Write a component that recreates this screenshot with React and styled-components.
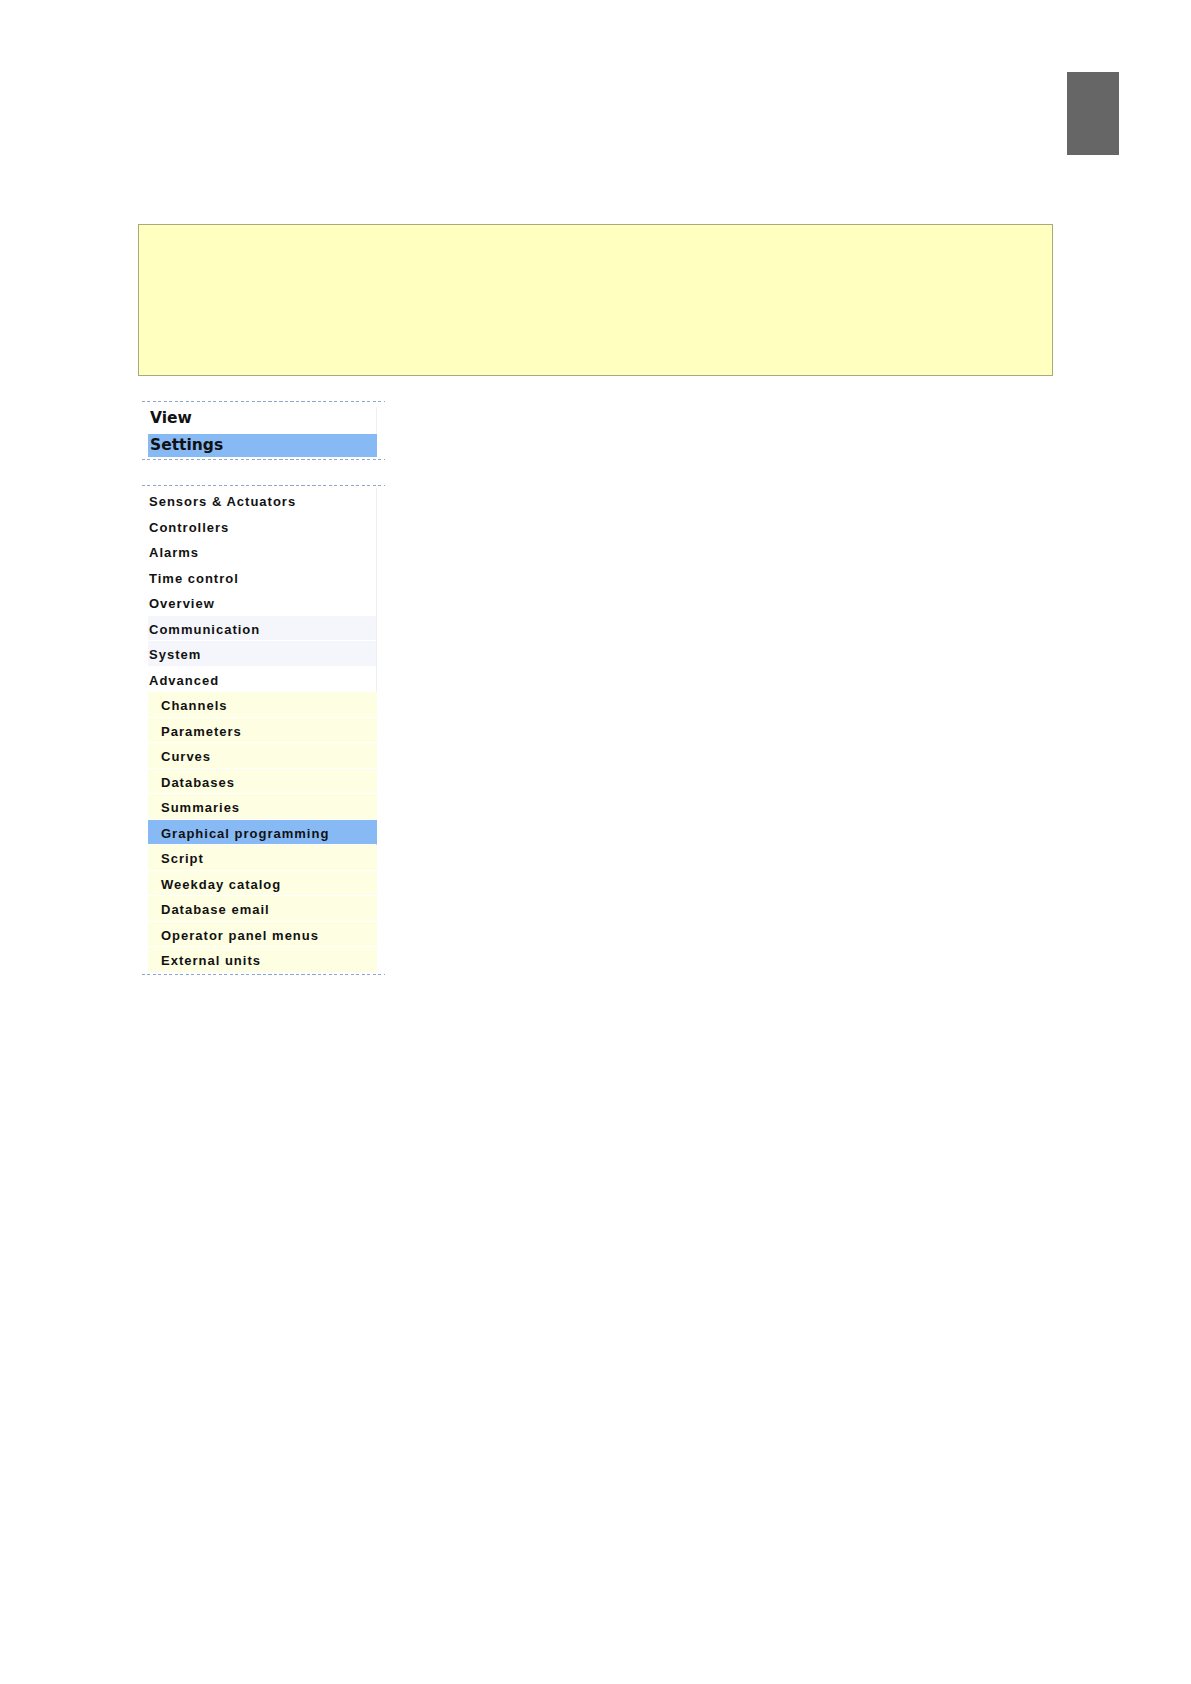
import React from "react";
import styled, { createGlobalStyle } from "styled-components";

const GlobalStyle = createGlobalStyle`
  html, body {
    margin: 0;
    padding: 0;
    background: #ffffff;
  }
  body {
    font-family: "Liberation Sans", Arial, sans-serif;
    color: #111;
  }
`;

const mainItems = [
  { label: "Sensors & Actuators" },
  { label: "Controllers" },
  { label: "Alarms" },
  { label: "Time control" },
  { label: "Overview" },
  { label: "Communication", tint: true },
  { label: "System", tint: true },
  { label: "Advanced" },
];

const subItems = [
  "Channels",
  "Parameters",
  "Curves",
  "Databases",
  "Summaries",
  "Graphical programming",
  "Script",
  "Weekday catalog",
  "Database email",
  "Operator panel menus",
  "External units",
];

const App = () => {
  return (
    <Page>
      <GlobalStyle />
      <Header>
        <Tab />
      </Header>
      <Note />
      <Menu>
        <TopItem>View</TopItem>
        <TopItem $active>Settings</TopItem>
      </Menu>
      <Menu $list>
        {mainItems.map((item) => (
          <Item key={item.label} $tint={item.tint}>
            {item.label}
          </Item>
        ))}
        {subItems.map((label) => (
          <Item key={label} $sub $active={label === "Graphical programming"}>
            {label}
          </Item>
        ))}
      </Menu>
    </Page>
  );
};

const Page = styled.div`
  width: 1191px;
  min-height: 1684px;
  padding-top: 72px;
  box-sizing: border-box;
  display: flex;
  flex-direction: column;
`;

const Header = styled.div`
  display: flex;
  justify-content: flex-end;
  padding-right: 72px;
`;

const Tab = styled.div`
  width: 52px;
  height: 83px;
  background: #666666;
`;

const Note = styled.div`
  margin: 69px 0 0 138px;
  width: 915px;
  height: 152px;
  box-sizing: border-box;
  background: #ffffc0;
  border: 1px solid #a9a97c;
`;

const dashed = `
  content: "";
  display: block;
  height: 1px;
  background: repeating-linear-gradient(
    to right,
    #8fa7c9 0,
    #8fa7c9 3px,
    transparent 3px,
    transparent 5.5px
  );
`;

const Menu = styled.div`
  margin-left: 142px;
  width: 243px;
  margin-top: 25px;
  display: flex;
  flex-direction: column;

  &::before {
    ${dashed}
    margin-bottom: ${(p) => (p.$list ? "2px" : "5px")};
  }
  &::after {
    ${dashed}
    margin-top: ${(p) => (p.$list ? "1px" : "2px")};
  }
`;

const TopItem = styled.div`
  margin-left: 6px;
  width: 229px;
  height: ${(p) => (p.$active ? "23px" : "27px")};
  padding-left: 2px;
  box-sizing: border-box;
  font-family: "DejaVu Sans", Verdana, sans-serif;
  font-weight: bold;
  font-size: 15.5px;
  line-height: ${(p) => (p.$active ? "23px" : "22px")};
  color: #111;
  background: ${(p) => (p.$active ? "#87baf5" : "#ffffff")};
  border-right: 1px solid ${(p) => (p.$active ? "#87baf5" : "#f0f0f0")};
`;

const Item = styled.div`
  margin-left: 6px;
  width: 229px;
  height: 25.5px;
  box-sizing: border-box;
  padding-left: ${(p) => (p.$sub ? "13px" : "1px")};
  padding-top: 3px;
  font-family: "Liberation Sans", Arial, sans-serif;
  font-weight: bold;
  font-size: 13px;
  letter-spacing: 1px;
  line-height: 21.5px;
  color: #111;
  border-bottom: 1px solid #ffffff;
  border-right: 1px solid
    ${(p) => (p.$active ? "#87baf5" : p.$sub ? "#fefee2" : "#eeeeee")};
  background: ${(p) =>
    p.$active ? "#87baf5" : p.$sub ? "#fefee2" : p.$tint ? "#f4f6fc" : "#ffffff"};
`;

export default App;
